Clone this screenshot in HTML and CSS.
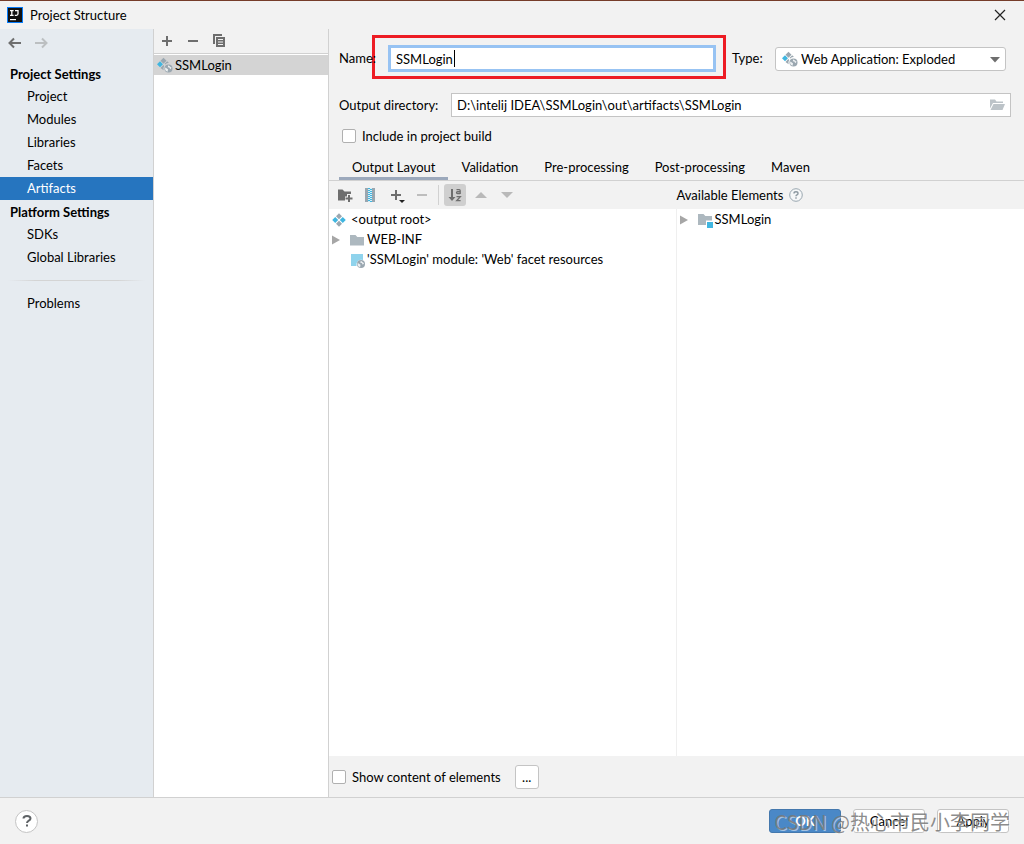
FILE: index.html
```html
<!DOCTYPE html>
<html lang="en">
<head>
<meta charset="utf-8">
<meta name="viewport" content="width=device-width, initial-scale=1">
<title>Project Structure</title>
<link rel="stylesheet" href="styles.css">
</head>
<body>
<svg class="symbols" aria-hidden="true">
  <symbol id="web-artifact" viewBox="0 0 16 16">
    <path fill="#9aa7b0" d="M6.500.8 9.500 3.800 6.500 6.800 3.500 3.800z"/>
    <path fill="#40b6e0" d="M3 4.300 6 7.300 3 10.300 0 7.300z"/>
    <path fill="#9aa7b0" d="M10.200 4.300 12 6.100A5 5 0 0 0 8.300 7.500L7.400 7z"/>
    <path fill="#9aa7b0" d="M6.300 8 7.200 8.900A5 5 0 0 0 6.600 13.300L3.500 10.900z"/>
    <circle cx="11.500" cy="11.500" r="4" fill="#9aa7b0"/>
    <path fill="#eef1f3" d="M8.300 10.600 11 12.300 10.600 14.800A3.400 3.400 0 0 1 8.300 10.600zM11.300 8.300 14.600 10.700 13.300 12.200 12.300 10.600 10.800 10.300z"/>
  </symbol>
  <symbol id="globe" viewBox="0 0 8 8">
    <circle cx="4" cy="4" r="4" fill="#9aa7b0"/>
    <path fill="#eef1f3" d="M.8 3.100 3.500 4.800 3.100 7.300A3.400 3.400 0 0 1 .8 3.100zM3.800.8 7.100 3.200 5.800 4.700 4.800 3.100 3.300 2.800z"/>
  </symbol>
  <symbol id="folder" viewBox="0 0 16 16">
    <path fill="#adb8bf" d="M1 3h5.500l1.800 2H15v8.500H1z"/>
  </symbol>
</svg>

<div class="window">
  <header class="titlebar">
    <svg class="logo" width="16" height="16" viewBox="0 0 16 16" aria-hidden="true">
      <path fill="#087cfa" d="M0 0h16v16H0z"/><path fill="#111" d="M1 1h14v14H1z"/>
      <path fill="none" stroke="#fff" stroke-width="1.300" d="M3 3.600h3.600M4.800 3.600v4.300M3 8.300h3.600M8 3.600h3v3.200q0 1.500-1.600 1.500H7.800"/>
      <path fill="#fff" d="M3 12h6v1.200H3z"/>
    </svg>
    <h1 class="title">Project Structure</h1>
    <button class="icon-button close" aria-label="Close">
      <svg width="12" height="12" viewBox="0 0 12 12"><path fill="none" stroke="#222" stroke-width="1.200" d="M1 1 11 11M11 1 1 11"/></svg>
    </button>
  </header>

  <main class="main">
    <nav class="sidebar" aria-label="Settings">
      <div class="history">
        <button class="icon-button" aria-label="Back"><svg width="14" height="12" viewBox="0 0 14 12"><path fill="none" stroke="#6e6e6e" stroke-width="2" d="M1.500 6H13M6 1.500 1.500 6 6 10.500"/></svg></button>
        <button class="icon-button" aria-label="Forward" disabled><svg width="14" height="12" viewBox="0 0 14 12"><path fill="none" stroke="#bcbfc1" stroke-width="2" d="M12.500 6H1M8 1.500 12.500 6 8 10.500"/></svg></button>
      </div>
      <h2 class="group">Project Settings</h2>
      <a class="nav-item" href="#project">Project</a>
      <a class="nav-item" href="#modules">Modules</a>
      <a class="nav-item" href="#libraries">Libraries</a>
      <a class="nav-item" href="#facets">Facets</a>
      <a class="nav-item selected" href="#artifacts" aria-current="page">Artifacts</a>
      <h2 class="group">Platform Settings</h2>
      <a class="nav-item" href="#sdks">SDKs</a>
      <a class="nav-item" href="#global">Global Libraries</a>
      <hr class="divider">
      <a class="nav-item" href="#problems">Problems</a>
    </nav>

    <section class="artifacts" aria-label="Artifacts">
      <div class="list-toolbar">
        <button class="icon-button" aria-label="Add"><svg width="16" height="16" viewBox="0 0 16 16"><path fill="#6e6e6e" d="M7 3h2v4h4v2H9v4H7V9H3V7h4z"/></svg></button>
        <button class="icon-button" aria-label="Remove"><svg width="16" height="16" viewBox="0 0 16 16"><path fill="#6e6e6e" d="M3 7h10v2H3z"/></svg></button>
        <button class="icon-button" aria-label="Copy"><svg width="16" height="16" viewBox="0 0 16 16"><path fill="#6e6e6e" d="M2 1h9v2H4v8H2zM5 4h9v10H5z"/><path fill="#f2f2f2" d="M7 6h5v1H7zM7 8.500h5v1H7zM7 11h5v1H7z"/></svg></button>
      </div>
      <div class="artifact-row"><svg width="16" height="16" aria-hidden="true"><use href="#web-artifact"/></svg>SSMLogin</div>
    </section>

    <section class="editor">
      <form class="form">
        <div class="name-row">
          <label class="name-label" for="name">Name:</label>
          <div class="name-box"><input class="name-input" id="name" value="SSMLogin"><span class="caret"></span></div>
          <label class="type-label" for="type">Type:</label>
          <div class="type-box">
            <select class="type-select" id="type"><option>Web Application: Exploded</option></select>
            <svg class="type-icon" width="16" height="16" aria-hidden="true"><use href="#web-artifact"/></svg>
            <svg class="type-arrow" width="10" height="6" viewBox="0 0 10 6" aria-hidden="true"><path fill="#6e6e6e" d="M0 0h10L5 5.500z"/></svg>
          </div>
        </div>
        <div class="output-row">
          <label class="output-label" for="output">Output directory:</label>
          <div class="output-box">
            <input class="output-input" id="output" value="D:\intelij IDEA\SSMLogin\out\artifacts\SSMLogin">
            <button type="button" class="icon-button" aria-label="Browse"><svg width="16" height="16" viewBox="0 0 16 16"><path fill="#bcc3c8" d="M1 2.500h5l1.500 2H14v1.500H4L1 11.500z"/><path fill="#bcc3c8" d="M4.500 7H16l-2.500 6H1.500z"/></svg></button>
          </div>
        </div>
        <label class="check build"><input type="checkbox">Include in project build</label>
      </form>

      <div class="tabs" role="tablist">
        <button class="tab active" role="tab" aria-selected="true">Output Layout</button>
        <button class="tab" role="tab">Validation</button>
        <button class="tab" role="tab">Pre-processing</button>
        <button class="tab" role="tab">Post-processing</button>
        <button class="tab" role="tab">Maven</button>
      </div>

      <div class="panes">
        <div class="layout-toolbar">
          <button class="icon-button tool" aria-label="New folder"><svg width="16" height="16" viewBox="0 0 16 16"><path fill="#6e6e6e" d="M1 2.500h4.500l2 2H14V7h-4v2.500H8v4H1z"/><path fill="#6e6e6e" d="M11 8h2v2.500h2.500v2H13V15h-2v-2.500H8.500v-2H11z"/></svg></button>
          <button class="icon-button tool" aria-label="New archive"><svg width="16" height="16" viewBox="0 0 16 16"><path fill="#9aa7b0" d="M2 1h3v14H2zM9 1h3v14H9z"/><path fill="#d5eef8" d="M5 1h4v14H5z"/><path stroke="#40b6e0" stroke-width="2" stroke-dasharray="1 1" d="M6 1v14M8 2v13" fill="none"/></svg></button>
          <button class="icon-button tool" aria-label="Add copy of"><svg width="16" height="16" viewBox="0 0 16 16"><path fill="#6e6e6e" d="M6 3h2v4h4v2H8v4H6V9H2V7h4z"/><path fill="#222" d="M10 13h6l-3 3z"/></svg></button>
          <button class="icon-button tool" aria-label="Remove" disabled><svg width="16" height="16" viewBox="0 0 16 16"><path fill="#bdbdbd" d="M2 7h10v2H2z"/></svg></button>
          <span class="separator"></span>
          <button class="icon-button tool sort" aria-label="Sort by name" aria-pressed="true"><svg width="16" height="16" viewBox="0 0 16 16"><path fill="#6e6e6e" d="M4 2h2v8h2.500L5 14 1.500 10H4z"/><path fill="none" stroke="#6e6e6e" stroke-width="1.300" d="M9.500 2.700h2.700q1 0 1 1V7M13 4.700h-2.500q-1 0-1 .9t1 .9H13M9.500 9.700h3.800l-3.600 4h3.900"/></svg></button>
          <button class="icon-button tool" aria-label="Move up" disabled><svg width="16" height="16" viewBox="0 0 16 16"><path fill="#b9b9b9" d="M2 11h12L8 5z"/></svg></button>
          <button class="icon-button tool" aria-label="Move down" disabled><svg width="16" height="16" viewBox="0 0 16 16"><path fill="#b9b9b9" d="M2 5h12l-6 6z"/></svg></button>
        </div>
        <div class="available-header">Available Elements
          <svg width="14" height="14" viewBox="0 0 14 14" aria-label="Help"><circle cx="7" cy="7" r="6.300" fill="#f6f7f8" stroke="#9aa7b0"/><path fill="none" stroke="#8c98a0" stroke-width="1.400" d="M5 5.500Q5 3.800 7 3.800T9 5.500Q9 6.400 8 6.900T7 8.300M7 9.300v1.400"/></svg>
        </div>
        <div class="tree output-tree">
          <div class="tree-row"><svg width="16" height="16" viewBox="0 0 16 16" aria-hidden="true"><path fill="#9aa7b0" d="M8 1.200 11 4.200 8 7.200 5 4.200zM8 8.800 11 11.800 8 14.800 5 11.800z"/><path fill="#40b6e0" d="M4.200 5 7.200 8 4.200 11 1.200 8zM11.800 5 14.800 8 11.800 11 8.800 8z"/></svg><span>&lt;output root&gt;</span></div>
          <div class="tree-row nested"><svg width="16" height="16" viewBox="0 0 16 16" aria-hidden="true"><path fill="#a6a6a6" d="M1 3.500 9 8 1 12.500z"/></svg><svg width="16" height="16" aria-hidden="true"><use href="#folder"/></svg><span>WEB-INF</span></div>
          <div class="tree-row nested leaf"><svg width="16" height="16" viewBox="0 0 16 16" aria-hidden="true"><path fill="#8fd3ec" d="M2 2h12v6A5 5 0 0 0 7.500 14H2z"/><use href="#globe" x="8" y="8" width="8" height="8"/></svg><span>'SSMLogin' module: 'Web' facet resources</span></div>
        </div>
        <div class="tree available-tree">
          <div class="tree-row nested"><svg width="16" height="16" viewBox="0 0 16 16" aria-hidden="true"><path fill="#a6a6a6" d="M1 3.500 9 8 1 12.500z"/></svg><svg width="16" height="16" viewBox="0 0 16 16" aria-hidden="true"><path fill="#adb8bf" d="M1 2h5.500l1.800 2H15v4.500H9V13H1z"/><path fill="#40b6e0" d="M10 10h6v6h-6z"/></svg><span>SSMLogin</span></div>
        </div>
      </div>

      <div class="content-options">
        <label class="check"><input type="checkbox">Show content of elements</label>
        <button class="more" aria-label="Options">...</button>
      </div>
    </section>
  </main>

  <footer class="footer">
    <button class="help" aria-label="Help"><svg width="12" height="14" viewBox="0 0 12 14"><path fill="none" stroke="#5f6366" stroke-width="2" d="M2.500 4.500Q2.500 2 6 2t3.500 2.500Q9.500 5.700 7.800 6.600T6 9M6 10.500v2"/></svg></button>
    <div class="actions">
      <button class="button primary">OK</button>
      <button class="button">Cancel</button>
      <button class="button">Apply</button>
    </div>
    <span class="watermark">CSDN @热心市民小李同学</span>
  </footer>
</div>
</body>
</html>
```
FILE: styles.css
```css
* { box-sizing: border-box; }

body {
  margin: 0;
  background: #f2f2f2;
  color: #000;
  font: 13px/20px Lato, "Open Sans", "Noto Sans CJK SC", sans-serif;
}

button, input, select { font: inherit; color: inherit; margin: 0; }
svg { flex: none; display: block; }
h1, h2 { margin: 0; font-size: 13px; }
.symbols { display: none; }

.window {
  display: flex;
  flex-direction: column;
  min-height: 100vh;
  border-top: 1px solid #763d2a;
}

.icon-button {
  display: flex;
  align-items: center;
  justify-content: center;
  padding: 0;
  border: 0;
  background: none;
}

.titlebar { display: flex; align-items: center; height: 28px; padding: 0 18px 0 7px; }
.title { margin-left: 7px; font-weight: 400; }
.close { margin-left: auto; }

.main { flex: 1; display: grid; grid-template-columns: 154px 175px minmax(0, 1fr); }

.sidebar { background: #e6ebf0; border-right: 1px solid #d1d1d1; }
.history { display: flex; gap: 12px; height: 33px; padding: 8px 8px 13px; }
.group { height: 23px; padding-left: 10px; line-height: 25px; font-weight: 700; white-space: nowrap; }
.nav-item { display: block; height: 23px; padding-left: 27px; line-height: 23px; color: inherit; text-decoration: none; white-space: nowrap; }
.nav-item.selected { background: #2675bf; color: #fff; }
.divider { height: 1px; margin: 11px 8px; border: 0; background: linear-gradient(90deg, transparent, #d4d4d4 20%, #d4d4d4 80%, transparent); }

.artifacts { background: #fff; border-right: 1px solid #d1d1d1; }
.list-toolbar { display: flex; gap: 10px; height: 25px; padding-left: 5px; background: #f2f2f2; border-bottom: 1px solid #d1d1d1; }
.artifact-row { display: flex; align-items: center; gap: 2px; height: 20px; margin-top: 1px; padding-left: 3px; background: #d4d4d4; }

.editor { display: flex; flex-direction: column; min-width: 0; }
.form { padding: 6px 13px 0 10px; }
.name-row { display: flex; align-items: center; margin-right: 5px; }
.name-label { z-index: 1; width: 33px; padding-top: 2px; white-space: nowrap; }
.name-box { flex: 1; position: relative; height: 44px; padding: 7px 7px 4px 13px; border: 3px solid #ed1c24; }
.name-input { display: block; width: 100%; height: 27px; padding: 0 5px; border: 3px solid #97c3f3; background: #fff; outline: 0; }
.caret { position: absolute; left: 79px; top: 12px; width: 1px; height: 17px; background: #000; }
.type-label { width: 49px; padding: 2px 0 0 6px; }
.type-box { position: relative; width: 231px; margin-top: 4px; }
.type-select { display: block; width: 100%; height: 24px; padding: 0 24px 0 25px; border: 1px solid #c4c4c4; border-radius: 3px; background: #fff; appearance: none; }
.type-icon { position: absolute; left: 7px; top: 4px; }
.type-arrow { position: absolute; right: 6px; top: 10px; }

.output-row { display: flex; align-items: center; margin-top: 14px; }
.output-label { width: 112px; white-space: nowrap; }
.output-box { flex: 1; display: flex; height: 24px; padding-right: 5px; background: #fff; border: 1px solid #c4c4c4; }
.output-input { flex: 1; min-width: 0; padding: 0 5px; border: 0; background: none; outline: 0; }

.check { display: flex; align-items: center; gap: 6px; }
.check input { appearance: none; width: 14px; height: 14px; background: #fff; border: 1px solid #b0b0b0; border-radius: 2px; }
.build { margin: 9px 0 0 3px; }

.tabs { display: flex; gap: 1px; height: 34px; margin-top: 1px; padding-left: 10px; border-bottom: 1px solid #d1d1d1; }
.tab { padding: 10px 12px 0 13px; border: 0; border-bottom: 3px solid transparent; background: none; line-height: 20px; white-space: nowrap; }
.tab.active { border-color: #9ca9bc; }

.panes { flex: 1; display: grid; grid-template: 28px 1fr / minmax(0, 1fr) minmax(0, 1fr); }
.layout-toolbar { display: flex; align-items: center; gap: 4px; padding-left: 5px; }
.tool { width: 22px; height: 22px; }
.separator { width: 1px; height: 20px; margin-right: 1px; background: #d1d1d1; }
.sort { background: #cfcfcf; border-radius: 3px; }
.available-header { display: flex; align-items: center; gap: 6px; white-space: nowrap; }
.tree { padding-left: 2px; background: #fff; }
.output-tree { margin-right: 1px; }
.available-tree { margin-left: -1px; border-left: 1px solid #efefef; }
.tree-row { display: flex; align-items: center; gap: 4px; height: 20px; white-space: nowrap; }
.tree-row svg { margin-top: 2px; }
.nested { gap: 2px; }
.leaf { padding-left: 18px; }

.content-options { display: flex; align-items: center; gap: 14px; height: 41px; padding-left: 3px; }
.more { width: 24px; height: 24px; padding: 0; border: 1px solid #c4c4c4; border-radius: 3px; background: #fff; }

.footer { position: relative; display: flex; align-items: center; justify-content: space-between; height: 47px; padding: 0 15px; border-top: 1px solid #d1d1d1; }
.help { display: grid; place-items: center; width: 23px; height: 23px; padding: 0; border: 1px solid #c4c4c4; border-radius: 50%; background: #fff; }
.actions { display: flex; gap: 12px; }
.button { width: 72px; height: 24px; padding: 0; border: 1px solid #c4c4c4; border-radius: 3px; background: #fff; }
.primary { background: #4a88c7; border-color: #4478ad; color: #fff; font-weight: 700; }
.watermark { position: absolute; right: 14px; top: 10px; color: rgba(120, 120, 120, .85); font: 20px/28px "Noto Sans CJK SC", sans-serif; text-shadow: 1px 1px 0 rgba(255, 255, 255, .5); white-space: nowrap; pointer-events: none; }
```
